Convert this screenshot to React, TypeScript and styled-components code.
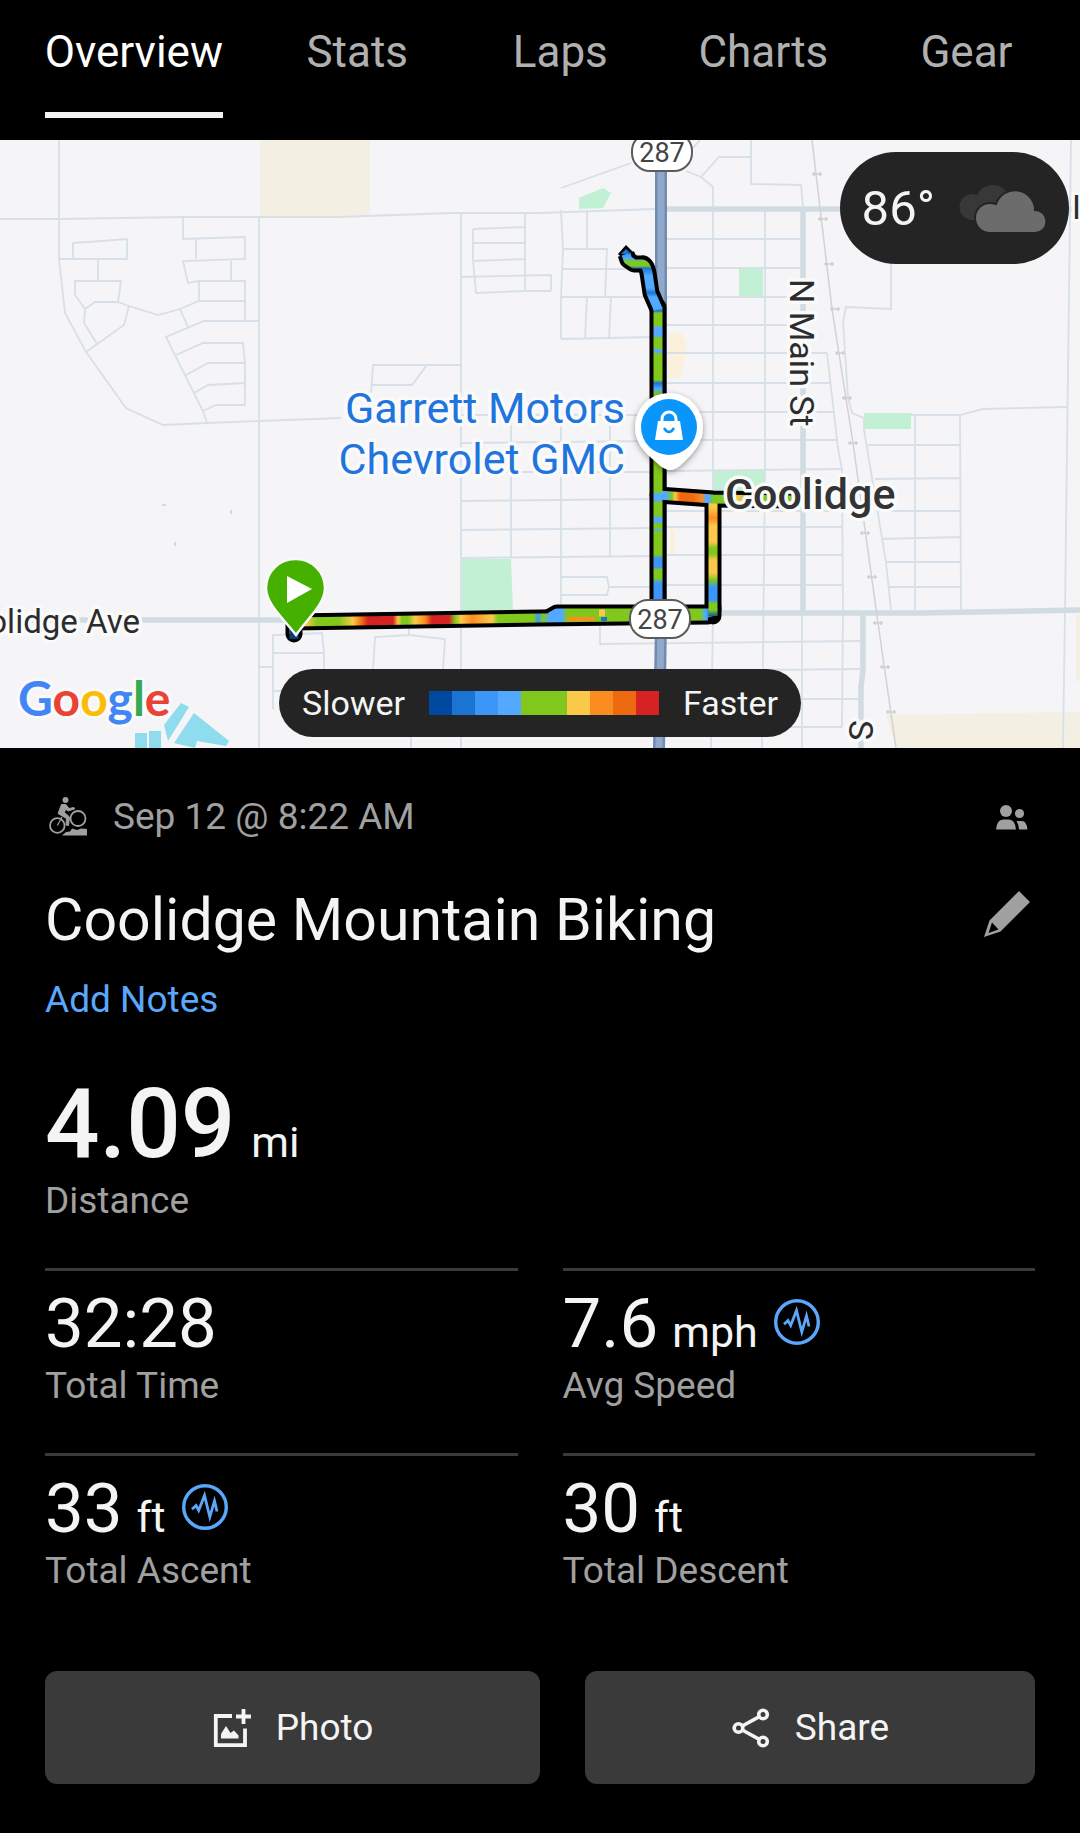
import React from "react";
import styled, { createGlobalStyle } from "styled-components";

const GlobalStyle = createGlobalStyle`
  html, body { margin: 0; background: #000; }
  *, *::before, *::after { box-sizing: border-box; }
  body { font-family: Roboto, "Liberation Sans", sans-serif; color: #f4f4f4; }
  button { font: inherit; color: inherit; border: 0; padding: 0; background: none; cursor: pointer; }
`;

const muted = "#a0a0a0";
const linkBlue = "#5aa7fb";
const panel = "#3a3a3a";
const pill = "#242424";

const speed = {
  navy: "#0049a0",
  deep: "#1a75d2",
  blue: "#3c96f8",
  sky: "#52a9ff",
  green: "#80c81c",
  yellow: "#fbc94a",
  amber: "#fb8c20",
  orange: "#ee6a10",
  red: "#d62222",
};

/* ---------- layout ---------- */

const Screen = styled.main`
  min-height: 100vh;
  background: #000;
`;

const TabBar = styled.nav`
  display: grid;
  grid-template-columns: 6fr repeat(4, 5fr);
  padding: 0 12px 22px;
  background: #000;
`;

const TabButton = styled.button<{ $active: boolean }>`
  display: flex;
  justify-content: center;
  color: ${(p) => (p.$active ? "#fff" : "#b0b0b0")};

  span {
    padding: 22px 0 30px;
    border-bottom: 6px solid ${(p) => (p.$active ? "#f4f4f4" : "transparent")};
    font-size: 44px;
    line-height: 60px;
  }
`;

const MapPanel = styled.section`
  position: relative;
  overflow: hidden;
  background: #f5f4f6;
`;

const MapSvg = styled.svg`
  display: block;
  width: 100%;
  height: auto;
`;

const WeatherPill = styled.div`
  position: absolute;
  top: 12px;
  right: 11px;
  display: flex;
  align-items: center;
  gap: 24px;
  height: 112px;
  padding: 0 22px;
  border-radius: 56px;
  background: ${pill};
  font-size: 49px;
`;

const LegendDock = styled.div`
  position: absolute;
  left: 0;
  right: 0;
  bottom: 11px;
  display: flex;
  justify-content: center;
`;

const LegendPill = styled.div`
  display: flex;
  align-items: center;
  gap: 24px;
  height: 68px;
  padding: 0 23px;
  border-radius: 34px;
  background: ${pill};
  font-size: 34px;
`;

const Scale = styled.div`
  display: flex;
`;

const Swatch = styled.i<{ $color: string }>`
  width: 23px;
  height: 24px;
  background: ${(p) => p.$color};
`;

const Details = styled.section`
  padding: 45px 45px 49px;
`;

const Row = styled.div`
  display: flex;
  align-items: center;
  justify-content: space-between;
`;

const When = styled.div`
  display: flex;
  align-items: center;
  gap: 24px;
  color: ${muted};
  font-size: 37px;
  line-height: 48px;
`;

const TitleRow = styled(Row)`
  margin-top: 43px;
`;

const Title = styled.h1`
  margin: 0;
  font-size: 59px;
  font-weight: 400;
  line-height: 72px;
`;

const IconSlot = styled.span`
  display: flex;
  padding: 0 7px;
  color: ${muted};
`;

const EditButton = styled.button`
  display: flex;
  padding: 0 5px 12px;
  color: ${muted};
`;

const NotesLink = styled.a`
  display: block;
  width: fit-content;
  margin-top: 20px;
  color: ${linkBlue};
  font-size: 37px;
  line-height: 48px;
  text-decoration: none;
`;

const Hero = styled.div`
  display: flex;
  flex-direction: column;
  gap: 5px;
  margin: 52px 0 43px;
`;

const HeroValue = styled.div`
  display: flex;
  align-items: baseline;
  gap: 16px;
  font-size: 96px;
  font-weight: 500;
  line-height: 96px;
`;

const Unit = styled.span`
  font-size: 43px;
  font-weight: 400;
  line-height: 44px;
`;

const Label = styled.div`
  color: ${muted};
  font-size: 37px;
  line-height: 48px;
`;

const StatGrid = styled.div`
  display: grid;
  grid-template-columns: 1fr 1fr;
  column-gap: 45px;
`;

const StatCell = styled.div`
  display: flex;
  flex-direction: column;
  gap: 4px;
  padding: 19px 0 43px;
  border-top: 3px solid ${panel};
`;

const StatLine = styled.div`
  display: flex;
  align-items: center;
  gap: 16px;
`;

const StatValue = styled.div`
  display: flex;
  align-items: baseline;
  gap: 14px;
  font-size: 69px;
  line-height: 68px;
`;

const InsightButton = styled.button`
  display: flex;
  color: ${linkBlue};
  padding-bottom: 4px;
`;

const Actions = styled.div`
  display: grid;
  grid-template-columns: 11fr 10fr;
  gap: 45px;
  margin-top: 33px;
`;

const ActionButton = styled.button`
  display: flex;
  align-items: center;
  justify-content: center;
  gap: 24px;
  height: 113px;
  border-radius: 12px;
  background: ${panel};
  font-size: 37px;
`;

/* ---------- icons ---------- */

const CloudIcon = () => (
  <svg width="88" height="50" viewBox="0 0 88 50" aria-hidden="true">
    <path d="M14 37A13 13 0 0 1 13 11Q16 11 18 12A17 17 0 0 1 48 10L30 37Z" fill="#383838" />
    <path
      d="M31 50A15 15 0 0 1 31 20Q34 20 37 21A20 20 0 0 1 76 27A11.500 11.500 0 0 1 76 50Z"
      fill="#6c6c6c"
      stroke={pill}
      strokeWidth="2"
    />
  </svg>
);

const BikeIcon = () => (
  <svg width="44" height="40" viewBox="-4 0 44 40" fill="none" stroke="currentColor" aria-hidden="true">
    <circle cx="16.500" cy="3" r="3" fill="currentColor" stroke="none" />
    <circle cx="8.300" cy="28.500" r="7.300" strokeWidth="1.800" />
    <circle cx="29" cy="21.500" r="7.500" strokeWidth="1.800" />
    <path d="M12.500 7.500L17 7.500L20 11.500L25 10.500L25.500 12L19 14L16.500 12L15.500 15.500L20.500 20L19.500 28.500L17 28L17.500 21.500L9 16.500Z" fill="currentColor" strokeWidth="1" />
    <path d="M8.300 28.500L13 20" strokeWidth="1.200" />
    <path d="M13 38.500L17 35L21 34.500L23 31.500L28 33L32 31.500L38 32V38.500Z" fill="currentColor" stroke="none" />
  </svg>
);

const PeopleIcon = () => (
  <svg width="32" height="25" viewBox="0 0 32 25" fill="currentColor" aria-hidden="true">
    <circle cx="10" cy="6" r="6" />
    <circle cx="23.500" cy="8.500" r="4.600" />
    <path d="M0 24.500Q1 14.500 7 14.500H13Q19 14.500 20 24.500Z" />
    <path d="M20.500 16H26Q30.500 16 31.500 24.500H23Q22.500 19 20.500 16Z" />
  </svg>
);

const PencilIcon = () => (
  <svg width="46" height="46" viewBox="0 0 46 46" aria-hidden="true">
    <path fillRule="evenodd" fill="currentColor" d="M35 0L46 11L16.500 40.500L0 46L5.500 29.500ZM8 31.500L4.500 42L14.500 38.500Z" />
  </svg>
);

const PulseIcon = () => (
  <svg width="46" height="46" viewBox="0 0 46 46" fill="none" stroke="currentColor" aria-hidden="true">
    <circle cx="23" cy="23" r="21.300" strokeWidth="3.400" />
    <path d="M10 25.300L14 21.500L16.700 26.500L22.500 11.500L27.800 33L32.500 17L35 27.500" strokeWidth="2.800" />
  </svg>
);

const PhotoIcon = () => (
  <svg width="40" height="40" viewBox="0 0 40 40" aria-hidden="true">
    <path d="M20 8H3.800V37.200H33V20.500" fill="none" stroke="currentColor" strokeWidth="3.800" />
    <path d="M31.500 1V16M24 8.500H39" stroke="currentColor" strokeWidth="3.800" />
    <path d="M9 30.500V26L14 18L18.500 25L22 22.500L26.500 27.500V30.500Z" fill="currentColor" />
  </svg>
);

const ShareIcon = () => (
  <svg width="40" height="40" viewBox="0 0 40 40" fill="none" stroke="currentColor" strokeWidth="3.600" aria-hidden="true">
    <circle cx="32" cy="6.500" r="4.300" />
    <circle cx="7.500" cy="20" r="4.300" />
    <circle cx="32" cy="33.500" r="4.300" />
    <path d="M28.300 8.700L11.300 18M11.300 22L28.300 31.300" />
  </svg>
);

/* ---------- map ---------- */

const streets = [
  "M59 0V119L65 173L86 212L126 268L163 285L207 283L259 281L341 278",
  "M0 79H59L183 77H339L451 73H540L655 69",
  "M259 77V608",
  "M73 119V103L127 99V119H59M98 119V141",
  "M118 162L121 141H75V155L85 169L84 183L97 204",
  "M85 169L95 162H118L129 166L158 175L180 169L199 161H245",
  "M129 166L124 185L86 212",
  "M183 77V99L245 97V119L183 121L188 143L199 141H245V181M196 99V119M231 119V141M199 141V161",
  "M180 169L188 187M259 181H204L166 197L203 271L207 283",
  "M176 215L203 203H243L245 223V265H216L203 271M186 235L208 223H245M194 253L208 245L245 243",
  "M461 73V608M461 137L551 135V151M473 89L525 87M473 89V120L476 153L525 151H551M525 73V151M473 103H525M473 121L525 119",
  "M461 225H373L371 253M371 245H412L427 225",
  "M461 275H650M461 303L655 301M461 332H655M461 361L655 359M461 390L655 388M461 418L655 416",
  "M511 275V418M561 275V465M610 275V417M561 437H607L609 447L607 455H561M609 447H655",
  "M259 527H273M273 569V495L322 493L324 513V530M273 513H324M273 551H290",
  "M373 530L375 497L409 495L445 499L443 530M409 483V495M411 597V608",
  "M561 48L631 23M686 31L701 37L713 47V470L711 608M701 37L719 17H751M751 0V44L801 45L803 67M700 0L693 8",
  "M561 70L563 110L561 157V199M587 70V109M563 109H607L605 157M563 129H655M561 157H655M587 157L585 199M611 157L609 199M561 199L655 197",
  "M667 99H803M667 128H803M667 157H803M667 185H803M667 213H827M667 243H831M667 272H835M667 300H838M667 331L842 329",
  "M667 371H843M667 387H843M667 415H843M667 445H843M600 485V504L860 501M665 531L860 529M665 559H860M665 587H842",
  "M765 69V330L762 608M827 213L838 308L842 330L843 470L842 587M802 473V608",
  "M891 123V169L846 167L843 182L848 257L852 273L864 278V290L886 422L891 470",
  "M911 275H960L983 269L1067 267M915 275V470M960 275L961 470M868 305H961M875 339L961 338M879 371H961M881 399L961 397M887 422H961M889 447H961",
  "M1071 0L1067 310L1065 470L1063 608",
];

const avenues = ["M0 480H300", "M666 69H1080", "M803 69V473", "M700 473H919L1080 470", "M863 475V530L861 547V608"];

const railTicks: [number, number][] = [
  [817, 34], [823, 79], [829, 124], [835, 169], [840, 213], [847, 258],
  [853, 303], [865, 393], [872, 437], [878, 483], [885, 527], [891, 572],
];

type Stop = [number, string];
const { navy, deep, blue, sky, green, yellow, amber, orange, red } = speed;

const westStops: Stop[] = [
  [306, yellow], [317, green], [339, green], [353, yellow], [362, orange], [368, red], [393, red], [398, yellow],
  [402, green], [408, green], [415, yellow], [425, amber], [432, red], [449, red], [455, green], [461, yellow],
  [472, amber], [492, yellow], [498, green], [534, green], [538, blue], [543, green], [550, sky], [562, sky],
  [567, green], [700, green], [706, sky], [713, navy],
];
const northStops: Stop[] = [
  [168, sky], [171, deep], [173, green], [186, green], [187, sky], [196, sky], [198, green], [208, green],
  [210, sky], [212, sky], [214, green], [240, green], [243, deep], [249, sky], [254, green], [352, green],
  [354, sky], [360, sky], [363, green], [375, green], [378, sky], [382, sky], [384, green], [388, green],
  [390, sky], [392, green], [415, green], [418, blue], [427, blue], [430, green], [438, green], [443, blue], [460, blue],
];
const eastStops: Stop[] = [
  [362, yellow], [368, yellow], [378, amber], [386, yellow], [402, yellow], [408, green], [414, green],
  [420, yellow], [433, yellow], [440, green], [447, blue], [460, blue], [464, green], [470, green], [477, navy],
];
const crossStops: Stop[] = [
  [666, sky], [672, green], [675, yellow], [680, orange], [693, orange], [702, amber], [706, sky], [709, sky],
  [713, green], [726, green], [736, yellow], [755, green], [790, green],
];
const tipStops: Stop[] = [
  [108, deep], [118, sky], [122, green], [126, green], [128, deep], [136, sky], [148, sky], [153, deep], [157, sky], [168, sky],
];

const Ramp = ({ id, stops, vertical }: { id: string; stops: Stop[]; vertical?: boolean }) => {
  const from = stops[0][0];
  const to = stops[stops.length - 1][0];
  return (
    <linearGradient
      id={id}
      gradientUnits="userSpaceOnUse"
      x1={vertical ? 0 : from}
      x2={vertical ? 0 : to}
      y1={vertical ? from : 0}
      y2={vertical ? to : 0}
    >
      {stops.map(([at, color], i) => (
        <stop key={i} offset={(at - from) / (to - from)} stopColor={color} />
      ))}
    </linearGradient>
  );
};

const routeParts = [
  { d: "M294 494V482L540 478L708 476", ramp: "west" },
  { d: "M550 477L557 473H708Q713 473 713 468", ramp: "west" },
  { d: "M713 476V360", ramp: "east" },
  { d: "M658 355L713 359L792 360", ramp: "cross" },
  { d: "M658 472V167", ramp: "north" },
  { d: "M658 169L651 153L648 133Q646 123 641 124L634 124L628 120L626 114", ramp: "tip" },
];

const MapLabel = styled.text<{ $size: number; $color?: string; $weight?: number }>`
  font-size: ${(p) => p.$size}px;
  font-weight: ${(p) => p.$weight ?? 400};
  fill: ${(p) => p.$color ?? "#2c2c2e"};
  stroke: #fafafa;
  stroke-width: 7px;
  stroke-linejoin: round;
  paint-order: stroke;
`;

const ShieldText = styled.text`
  font-size: 27px;
  fill: #444;
  text-anchor: middle;
`;

const LogoText = styled.text`
  font-family: Lato, sans-serif;
  font-size: 48px;
  font-weight: 700;
  stroke: #fafafa;
  stroke-width: 6px;
  stroke-linejoin: round;
  paint-order: stroke;
`;

const Shield = ({ x, y }: { x: number; y: number }) => (
  <g>
    <rect x={x - 30} y={y - 19} width="60" height="38" rx="18" fill="#fff" stroke="#5c5c5c" strokeWidth="2" />
    <ShieldText x={x} y={y + 10}>287</ShieldText>
  </g>
);

const RouteMap = () => (
  <MapSvg viewBox="0 0 1080 608" role="img" aria-label="Route map of Coolidge">
    <defs>
      <Ramp id="west" stops={westStops} />
      <Ramp id="cross" stops={crossStops} />
      <Ramp id="north" stops={northStops} vertical />
      <Ramp id="east" stops={eastStops} vertical />
      <Ramp id="tip" stops={tipStops} vertical />
      <filter id="pinShadow" x="-30%" y="-30%" width="160%" height="160%">
        <feDropShadow dx="0" dy="2" stdDeviation="3" floodOpacity="0.4" />
      </filter>
    </defs>
    <rect width="1080" height="608" fill="#f5f4f6" />
    <g fill="#f3efe3">
      <path d="M260 0H370V75L339 77H260Z" />
      <path d="M886 575L1080 572V608H896ZM1076 475H1080V541H1076Z" />
    </g>
    <g fill="#faf0dc">
      <path d="M668 195L680 192L687 203L681 238H668ZM670 390H675V415H670Z" />
    </g>
    <g fill="#c2f0d4">
      <path d="M579 58L603 48L611 53L603 68L579 69Z" />
      <path d="M739 128H763V156H739ZM864 273H911V289H864ZM712 330H764V360H712Z" />
      <path d="M461 419H511L513 472H461Z" />
    </g>
    <g fill="#8edcee">
      <path d="M135 593H147V608H135ZM149 591H161V608H149ZM181 563L189 567L168 601L164 585Z" />
      <path d="M194 573L229 601L226 606L197 601L195 608L174 603Z" />
    </g>
    <g fill="none" stroke="#d7e0e8" strokeWidth="1.800">
      {streets.map((d) => (
        <path key={d} d={d} />
      ))}
    </g>
    <g fill="none" stroke="#d0dbe2" strokeWidth="5.500">
      {avenues.map((d) => (
        <path key={d} d={d} />
      ))}
    </g>
    <path d="M812 0L832 169L853 303L878 483L896 608" fill="none" stroke="#d2d2d4" strokeWidth="1.500" />
    <g stroke="#cfcfd1" strokeWidth="1.500">
      {railTicks.map(([x, y]) => (
        <path key={y} d={`M${x - 5} ${y}H${x + 5}M${x - 3} ${y - 2}V${y + 2}M${x + 3} ${y - 2}V${y + 2}`} />
      ))}
      <path d="M162 365H166M231 370V374M175 402V406" />
    </g>
    <path d="M661 0V480L659 608" fill="none" stroke="#708cb2" strokeWidth="12" />
    <path d="M661 0V480L659 608" fill="none" stroke="#90a8ca" strokeWidth="7" />

    <path d="M618 114L626 105L637 116L628 124Z" fill="#000" />
    <g fill="none" stroke="#000" strokeWidth="17" strokeLinejoin="round">
      {routeParts.map((p, i) => (
        <path key={p.d} d={p.d} strokeLinecap={i === routeParts.length - 1 ? "butt" : "round"} />
      ))}
    </g>
    <g fill="none" strokeWidth="9" strokeLinejoin="round">
      {routeParts.map((p) => (
        <path key={p.d} d={p.d} stroke={`url(#${p.ramp})`} />
      ))}
      <path d="M621 114L626 109L631 114Z" fill={deep} />
      <path d="M567 479L595 479" stroke={amber} strokeWidth="4" />
      <path d="M599 473H605" stroke={yellow} strokeWidth="7" />
      <path d="M601 479H607" stroke={deep} strokeWidth="4" />
      <path d="M294 499V488" stroke="#0b3a78" strokeWidth="9" />
    </g>

    <Shield x={662} y={12} />
    <Shield x={660} y={479} />

    <MapLabel $size={43} $color="#1f75dd" textAnchor="end" x={625} y={283}>Garrett Motors</MapLabel>
    <MapLabel $size={43} $color="#1f75dd" textAnchor="end" x={625} y={334}>Chevrolet GMC</MapLabel>
    <MapLabel $size={43} $color="#333335" $weight={500} x={725} y={369}>Coolidge</MapLabel>
    <MapLabel $size={33} textAnchor="end" x={140} y={493}>Coolidge Ave</MapLabel>
    <MapLabel $size={34} transform="translate(790 139) rotate(90)">N Main St</MapLabel>
    <MapLabel $size={34} transform="translate(849 580) rotate(90)">S</MapLabel>
    <MapLabel $size={33} x={1072} y={79}>I</MapLabel>

    <g>
      <path
        d="M669 253A34 34 0 0 1 703 287C703 302 694 312 684 322Q676 330 670 330Q664 330 656 322C644 312 635 302 635 287A34 34 0 0 1 669 253Z"
        fill="#fff"
        filter="url(#pinShadow)"
      />
      <circle cx="669" cy="287" r="28" fill="#0a95fb" />
      <path d="M658 281H680L683 300H655Z" fill="#fff" />
      <path d="M662 283V279A7 7 0 0 1 676 279V283" fill="none" stroke="#fff" strokeWidth="3" />
      <path d="M664 288Q669 296 674 288" fill="none" stroke="#0a95fb" strokeWidth="2.500" />
    </g>

    <path
      d="M295.500 419A29 29 0 0 1 325 448C325 464 308 478 296 495C283 478 266 464 266 448A29 29 0 0 1 295.500 419Z"
      fill="#46b000"
      stroke="#fafafa"
      strokeWidth="2.500"
    />
    <path d="M287 436L312 449L287 463Z" fill="#fff" />

    <LogoText x={18} y={576}>
      <tspan fill="#4285f4">G</tspan>
      <tspan fill="#ea4335">o</tspan>
      <tspan fill="#fbbc05">o</tspan>
      <tspan fill="#4285f4">g</tspan>
      <tspan fill="#34a853">l</tspan>
      <tspan fill="#ea4335">e</tspan>
    </LogoText>
  </MapSvg>
);

/* ---------- screen ---------- */

const tabs = ["Overview", "Stats", "Laps", "Charts", "Gear"];
const scale = [navy, deep, blue, sky, green, green, yellow, amber, orange, red];
const stats = [
  { value: "32:28", label: "Total Time" },
  { value: "7.6", unit: "mph", label: "Avg Speed", insight: true },
  { value: "33", unit: "ft", label: "Total Ascent", insight: true },
  { value: "30", unit: "ft", label: "Total Descent" },
];

export default function App() {
  const [active, setActive] = React.useState("Overview");
  return (
    <Screen>
      <GlobalStyle />
      <TabBar aria-label="Activity sections">
        {tabs.map((tab) => (
          <TabButton
            key={tab}
            type="button"
            $active={tab === active}
            aria-current={tab === active ? "page" : undefined}
            onClick={() => setActive(tab)}
          >
            <span>{tab}</span>
          </TabButton>
        ))}
      </TabBar>

      <MapPanel>
        <RouteMap />
        <WeatherPill>
          <span>86°</span>
          <CloudIcon />
        </WeatherPill>
        <LegendDock>
          <LegendPill>
            <span>Slower</span>
            <Scale>
              {scale.map((color, i) => (
                <Swatch key={i} $color={color} />
              ))}
            </Scale>
            <span>Faster</span>
          </LegendPill>
        </LegendDock>
      </MapPanel>

      <Details>
        <Row>
          <When>
            <BikeIcon />
            <span>Sep 12 @ 8:22 AM</span>
          </When>
          <IconSlot>
            <PeopleIcon />
          </IconSlot>
        </Row>
        <TitleRow>
          <Title>Coolidge Mountain Biking</Title>
          <EditButton type="button" aria-label="Edit title">
            <PencilIcon />
          </EditButton>
        </TitleRow>
        <NotesLink href="#notes">Add Notes</NotesLink>

        <Hero>
          <HeroValue>
            4.09 <Unit>mi</Unit>
          </HeroValue>
          <Label>Distance</Label>
        </Hero>

        <StatGrid>
          {stats.map((s) => (
            <StatCell key={s.label}>
              <StatLine>
                <StatValue>
                  {s.value}
                  {s.unit && <Unit>{s.unit}</Unit>}
                </StatValue>
                {s.insight && (
                  <InsightButton type="button" aria-label={`${s.label} chart`}>
                    <PulseIcon />
                  </InsightButton>
                )}
              </StatLine>
              <Label>{s.label}</Label>
            </StatCell>
          ))}
        </StatGrid>

        <Actions>
          <ActionButton type="button">
            <PhotoIcon />
            Photo
          </ActionButton>
          <ActionButton type="button">
            <ShareIcon />
            Share
          </ActionButton>
        </Actions>
      </Details>
    </Screen>
  );
}
